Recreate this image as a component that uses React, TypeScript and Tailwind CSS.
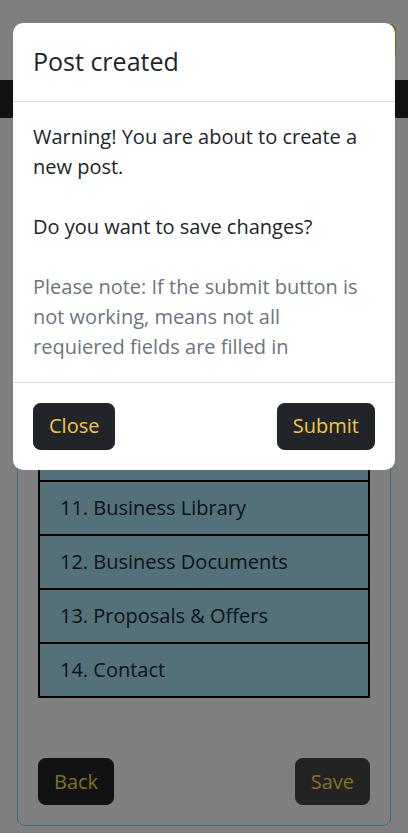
const items = [
  "11. Business Library",
  "12. Business Documents",
  "13. Proposals & Offers",
  "14. Contact",
];

export default function App() {
  return (
    <div className="relative min-h-[833px] overflow-hidden bg-white font-['Open_Sans',sans-serif]">
      {/* page behind the dialog */}
      <header className="flex h-[80px] items-center justify-between pl-[90px] pr-[12px]">
        <div className="flex items-center gap-3">
          <div className="h-[30px] w-[10px] rounded-sm bg-[#333]" />
          <div className="h-[14px] w-[70px] rounded-sm bg-[#555]" />
        </div>
        <div className="mt-[4px] h-[36px] w-[54px] rounded-md border-2 border-[#ffc107]" />
      </header>
      <nav className="h-[38px] bg-[#222426]" />

      <main className="mx-[17px] mb-[9px] mt-[17px] rounded-b-lg border border-[#6cd8ec] px-5 pb-5 pt-5">
        <ul className="text-[20px] leading-[30px] text-[#1a2a30]">
          {[0, 1, 2, 3, 4, 5].map((i) => (
            <li key={i} className="h-[54px] border-x-2 border-t-2 border-black bg-[#a8e0f2]" />
          ))}
          {items.map((item, i) => (
            <li
              key={item}
              className={`border-x-2 border-t-2 border-black bg-[#a8e0f2] py-[11px] pl-5 ${i === items.length - 1 ? "border-b-2" : ""}`}
            >
              {item}
            </li>
          ))}
        </ul>

        <div className="mt-[60px] flex items-center justify-between">
          <button className="rounded-[7.5px] border border-[#212529] bg-[#212529] px-[15px] py-[7.5px] text-[20px] leading-[30px] text-[#ffdf40]">
            Back
          </button>
          <button className="rounded-[7.5px] border border-[#474747] bg-[#474747] px-[15px] py-[7.5px] text-[20px] leading-[30px] text-[#ffdf40]">
            Save
          </button>
        </div>
      </main>

      {/* backdrop */}
      <div className="absolute inset-0 bg-black/50" />

      {/* dialog */}
      <div className="absolute left-[13px] top-[23px] w-[382px] rounded-[10px] bg-white text-[#212529]">
        <div className="border-b border-[#dee2e6] px-5 py-5">
          <h5 className="text-[25px] leading-[37.5px] font-medium">Post created</h5>
        </div>
        <div className="p-5 text-[20px] leading-[30px]">
          <p className="mb-[30px]">Warning! You are about to create a new post.</p>
          <p className="mb-[30px]">Do you want to save changes?</p>
          <p className="text-[#6c757d]">
            Please note: If the submit button is not working, means not all requiered fields are filled in
          </p>
        </div>
        <div className="flex items-center justify-between border-t border-[#dee2e6] px-5 py-5">
          <button className="rounded-[7.5px] border border-[#212529] bg-[#212529] px-[15px] py-[7.5px] text-[20px] leading-[30px] text-[#f5c542]">
            Close
          </button>
          <button className="rounded-[7.5px] border border-[#212529] bg-[#212529] px-[15px] py-[7.5px] text-[20px] leading-[30px] text-[#f5c542]">
            Submit
          </button>
        </div>
      </div>
    </div>
  );
}
